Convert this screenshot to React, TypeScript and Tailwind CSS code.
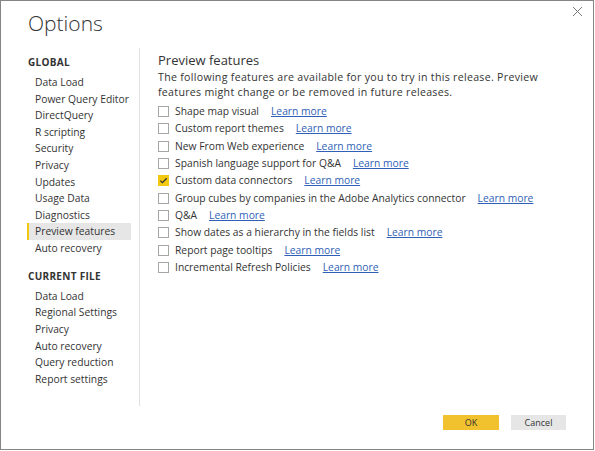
import React from "react";

const globalItems = [
  "Data Load",
  "Power Query Editor",
  "DirectQuery",
  "R scripting",
  "Security",
  "Privacy",
  "Updates",
  "Usage Data",
  "Diagnostics",
  "Preview features",
  "Auto recovery",
];

const fileItems = [
  "Data Load",
  "Regional Settings",
  "Privacy",
  "Auto recovery",
  "Query reduction",
  "Report settings",
];

const features: { label: string; checked?: boolean }[] = [
  { label: "Shape map visual" },
  { label: "Custom report themes" },
  { label: "New From Web experience" },
  { label: "Spanish language support for Q&A" },
  { label: "Custom data connectors", checked: true },
  { label: "Group cubes by companies in the Adobe Analytics connector" },
  { label: "Q&A" },
  { label: "Show dates as a hierarchy in the fields list" },
  { label: "Report page tooltips" },
  { label: "Incremental Refresh Policies" },
];

function Checkbox({ checked }: { checked?: boolean }) {
  if (checked) {
    return (
      <span className="w-[11px] h-[11px] bg-[#f2c811] flex items-center justify-center shrink-0">
        <svg width="9" height="9" viewBox="0 0 9 9">
          <path d="M1.3 4.6 L3.4 6.6 L7.7 2.2" fill="none" stroke="#333" strokeWidth="1.3" />
        </svg>
      </span>
    );
  }
  return <span className="w-[11px] h-[11px] border border-[#a6a6a6] bg-white shrink-0" />;
}

export default function App() {
  return (
    <div className="w-[595px] h-[451px] bg-white" style={{ fontFamily: '"Open Sans", "Noto Sans", sans-serif' }}>
      <div className="w-[594px] h-[450px] border border-[#858585] flex flex-col text-[#333333]">
        <div className="flex justify-between items-start h-[46px]">
          <div className="pl-[27px] pt-[7px] text-[21px] font-light leading-[30px] text-[#333]">Options</div>
          <div className="pr-[10px] pt-[5px]">
            <svg width="11" height="11" viewBox="0 0 11 11">
              <path d="M1 1 L10 10 M10 1 L1 10" stroke="#7a7a7a" strokeWidth="1" />
            </svg>
          </div>
        </div>
        <div className="flex flex-1 min-h-0">
          <div className="w-[139px] h-[358px] mt-[1px] border-r border-[#e0e0e0] shrink-0 pl-[26px] pr-[8px] text-[10.3px]">
            <div className="font-bold text-[10px] tracking-[0.3px] leading-[17px] pl-[1px] mt-[6px] text-[#333]">GLOBAL</div>
            <div className="mt-[3px]">
              {globalItems.map((it) => {
                const active = it === "Preview features";
                return (
                  <div
                    key={it}
                    className={
                      "h-[16.6px] leading-[16.6px] pl-[6px] border-l-2 " +
                      (active ? "bg-[#e6e6e6] border-[#f2c811]" : "border-transparent")
                    }
                  >
                    {it}
                  </div>
                );
              })}
            </div>
            <div className="font-bold text-[10px] tracking-[0.3px] leading-[17px] pl-[1px] mt-[11px]">CURRENT FILE</div>
            <div className="mt-[3px]">
              {fileItems.map((it) => (
                <div key={it} className="h-[16.7px] leading-[16.7px] pl-[6px] border-l-2 border-transparent">
                  {it}
                </div>
              ))}
            </div>
          </div>
          <div className="flex-1 flex flex-col pl-[18px]">
            <div className="text-[13px] leading-[18px] mt-[4px]">Preview features</div>
            <div className="text-[10.6px] tracking-[0.3px] leading-[15px] mt-[1px] w-[392px]">
              The following features are available for you to try in this release. Preview features might change or be removed in future releases.
            </div>
            <div className="mt-[3px] flex flex-col text-[10.3px]">
              {features.map((f) => (
                <div key={f.label} className="h-[17.33px] flex items-center gap-[6px]">
                  <Checkbox checked={f.checked} />
                  <span className="whitespace-nowrap">{f.label}</span>
                  <span className="ml-[6px] text-[#2f5fb6] underline whitespace-nowrap">Learn more</span>
                </div>
              ))}
            </div>
            <div className="flex-1" />
            <div className="flex justify-end gap-[12px] pr-[27px] pb-[19px] text-[9px]">
              <button className="w-[56px] h-[15px] bg-[#f2c12e] leading-[15px] text-[#333]">OK</button>
              <button className="w-[55px] h-[15px] bg-[#e6e6e6] leading-[15px] text-[#333]">Cancel</button>
            </div>
          </div>
        </div>
      </div>
    </div>
  );
}
